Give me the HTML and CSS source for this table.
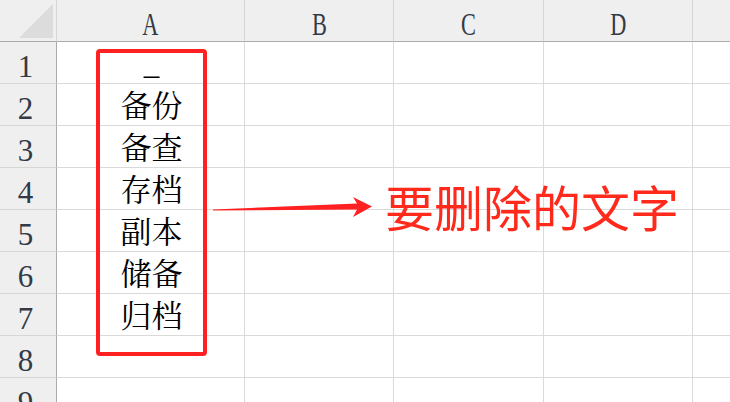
FILE: index.html
```html
<!DOCTYPE html>
<html lang="zh-CN">
<head>
<meta charset="utf-8">
<title>Sheet</title>
<link rel="stylesheet" href="styles.css">
</head>
<body>
<div class="sheet">
  <div class="grid">
    <div class="corner">
      <svg class="tri" width="57" height="42" viewBox="0 0 57 42"><polygon points="19,38 53,4 53,38" fill="#dcdcdc"/></svg>
    </div>
    <div class="colhead"><span class="letter">A</span></div>
    <div class="colhead"><span class="letter">B</span></div>
    <div class="colhead"><span class="letter">C</span></div>
    <div class="colhead"><span class="letter">D</span></div>
    <div class="colhead last"></div>

    <div class="rowhead">1</div><div class="cell"></div><div class="cell"></div><div class="cell"></div><div class="cell"></div><div class="cell last"></div>
    <div class="rowhead">2</div><div class="cell"></div><div class="cell"></div><div class="cell"></div><div class="cell"></div><div class="cell last"></div>
    <div class="rowhead">3</div><div class="cell"></div><div class="cell"></div><div class="cell"></div><div class="cell"></div><div class="cell last"></div>
    <div class="rowhead">4</div><div class="cell"></div><div class="cell"></div><div class="cell"></div><div class="cell"></div><div class="cell last"></div>
    <div class="rowhead">5</div><div class="cell"></div><div class="cell"></div><div class="cell"></div><div class="cell"></div><div class="cell last"></div>
    <div class="rowhead">6</div><div class="cell"></div><div class="cell"></div><div class="cell"></div><div class="cell"></div><div class="cell last"></div>
    <div class="rowhead">7</div><div class="cell"></div><div class="cell"></div><div class="cell"></div><div class="cell"></div><div class="cell last"></div>
    <div class="rowhead">8</div><div class="cell"></div><div class="cell"></div><div class="cell"></div><div class="cell"></div><div class="cell last"></div>
    <div class="rowhead">9</div><div class="cell"></div><div class="cell"></div><div class="cell"></div><div class="cell"></div><div class="cell last"></div>
  </div>

  <div class="textbox">
    <div class="line dash">_</div>
    <div class="line">备份</div>
    <div class="line">备查</div>
    <div class="line">存档</div>
    <div class="line">副本</div>
    <div class="line">储备</div>
    <div class="line">归档</div>
  </div>

  <div class="redbox"></div>

  <svg class="arrow" width="170" height="30" viewBox="0 0 170 30">
    <polygon points="3,17.4 147,11.6 143,5 162,14.5 143,25 147,17.6 3,18.6" fill="#ff2121"/>
  </svg>

  <div class="label">要删除的文字</div>
</div>
</body>
</html>
```

FILE: styles.css
```css
html, body {
  margin: 0;
  padding: 0;
  background: #ffffff;
  overflow: hidden;
}

.sheet {
  position: relative;
  width: 730px;
  height: 402px;
  overflow: hidden;
}

.grid {
  display: grid;
  grid-template-columns: 57px 188px 149px 150px 149px 1fr;
  grid-auto-rows: 42px;
}

.grid > div {
  box-sizing: border-box;
}

.corner {
  background: #efefef;
  border-right: 1px solid #d6d6d6;
  border-bottom: 1px solid #ababab;
  position: relative;
}

.tri {
  display: block;
}

.colhead {
  background: #efefef;
  border-right: 1px solid #d6d6d6;
  border-bottom: 1px solid #ababab;
  display: flex;
  align-items: center;
  justify-content: center;
  padding-top: 8px;
  font-family: "Liberation Serif", "Times New Roman", serif;
  font-size: 31px;
  line-height: 1;
  color: #333a45;
}

.letter {
  display: inline-block;
  transform: scaleX(0.72);
}

.rowhead {
  background: #efefef;
  border-right: 1px solid #ababab;
  border-bottom: 1px solid #d6d6d6;
  display: flex;
  align-items: center;
  justify-content: center;
  padding-top: 8px;
  padding-right: 5px;
  font-family: "Liberation Serif", "Times New Roman", serif;
  font-size: 31px;
  line-height: 1;
  color: #333a45;
}

.cell {
  border-right: 1px solid #dadada;
  border-bottom: 1px solid #dadada;
}

.last {
  border-right: none;
}

.textbox {
  position: absolute;
  left: 96px;
  top: 41px;
  width: 111px;
  font-family: "Noto Serif CJK SC", "Noto Sans CJK SC", sans-serif;
  font-size: 31px;
  line-height: 42px;
  text-align: center;
  color: #000000;
}

.dash {
  box-sizing: border-box;
  height: 42px;
  padding-top: 3px;
  line-height: 39px;
  font-family: "Liberation Serif", serif;
}

.redbox {
  position: absolute;
  left: 96px;
  top: 49px;
  width: 111px;
  height: 307px;
  box-sizing: border-box;
  border: 4px solid #ff2121;
  border-radius: 4px;
}

.arrow {
  position: absolute;
  left: 210px;
  top: 192px;
}

.label {
  position: absolute;
  left: 385px;
  top: 181px;
  font-family: "Noto Sans CJK SC", sans-serif;
  font-size: 49px;
  line-height: 49px;
  color: #ff2a1c;
  white-space: nowrap;
}
```
